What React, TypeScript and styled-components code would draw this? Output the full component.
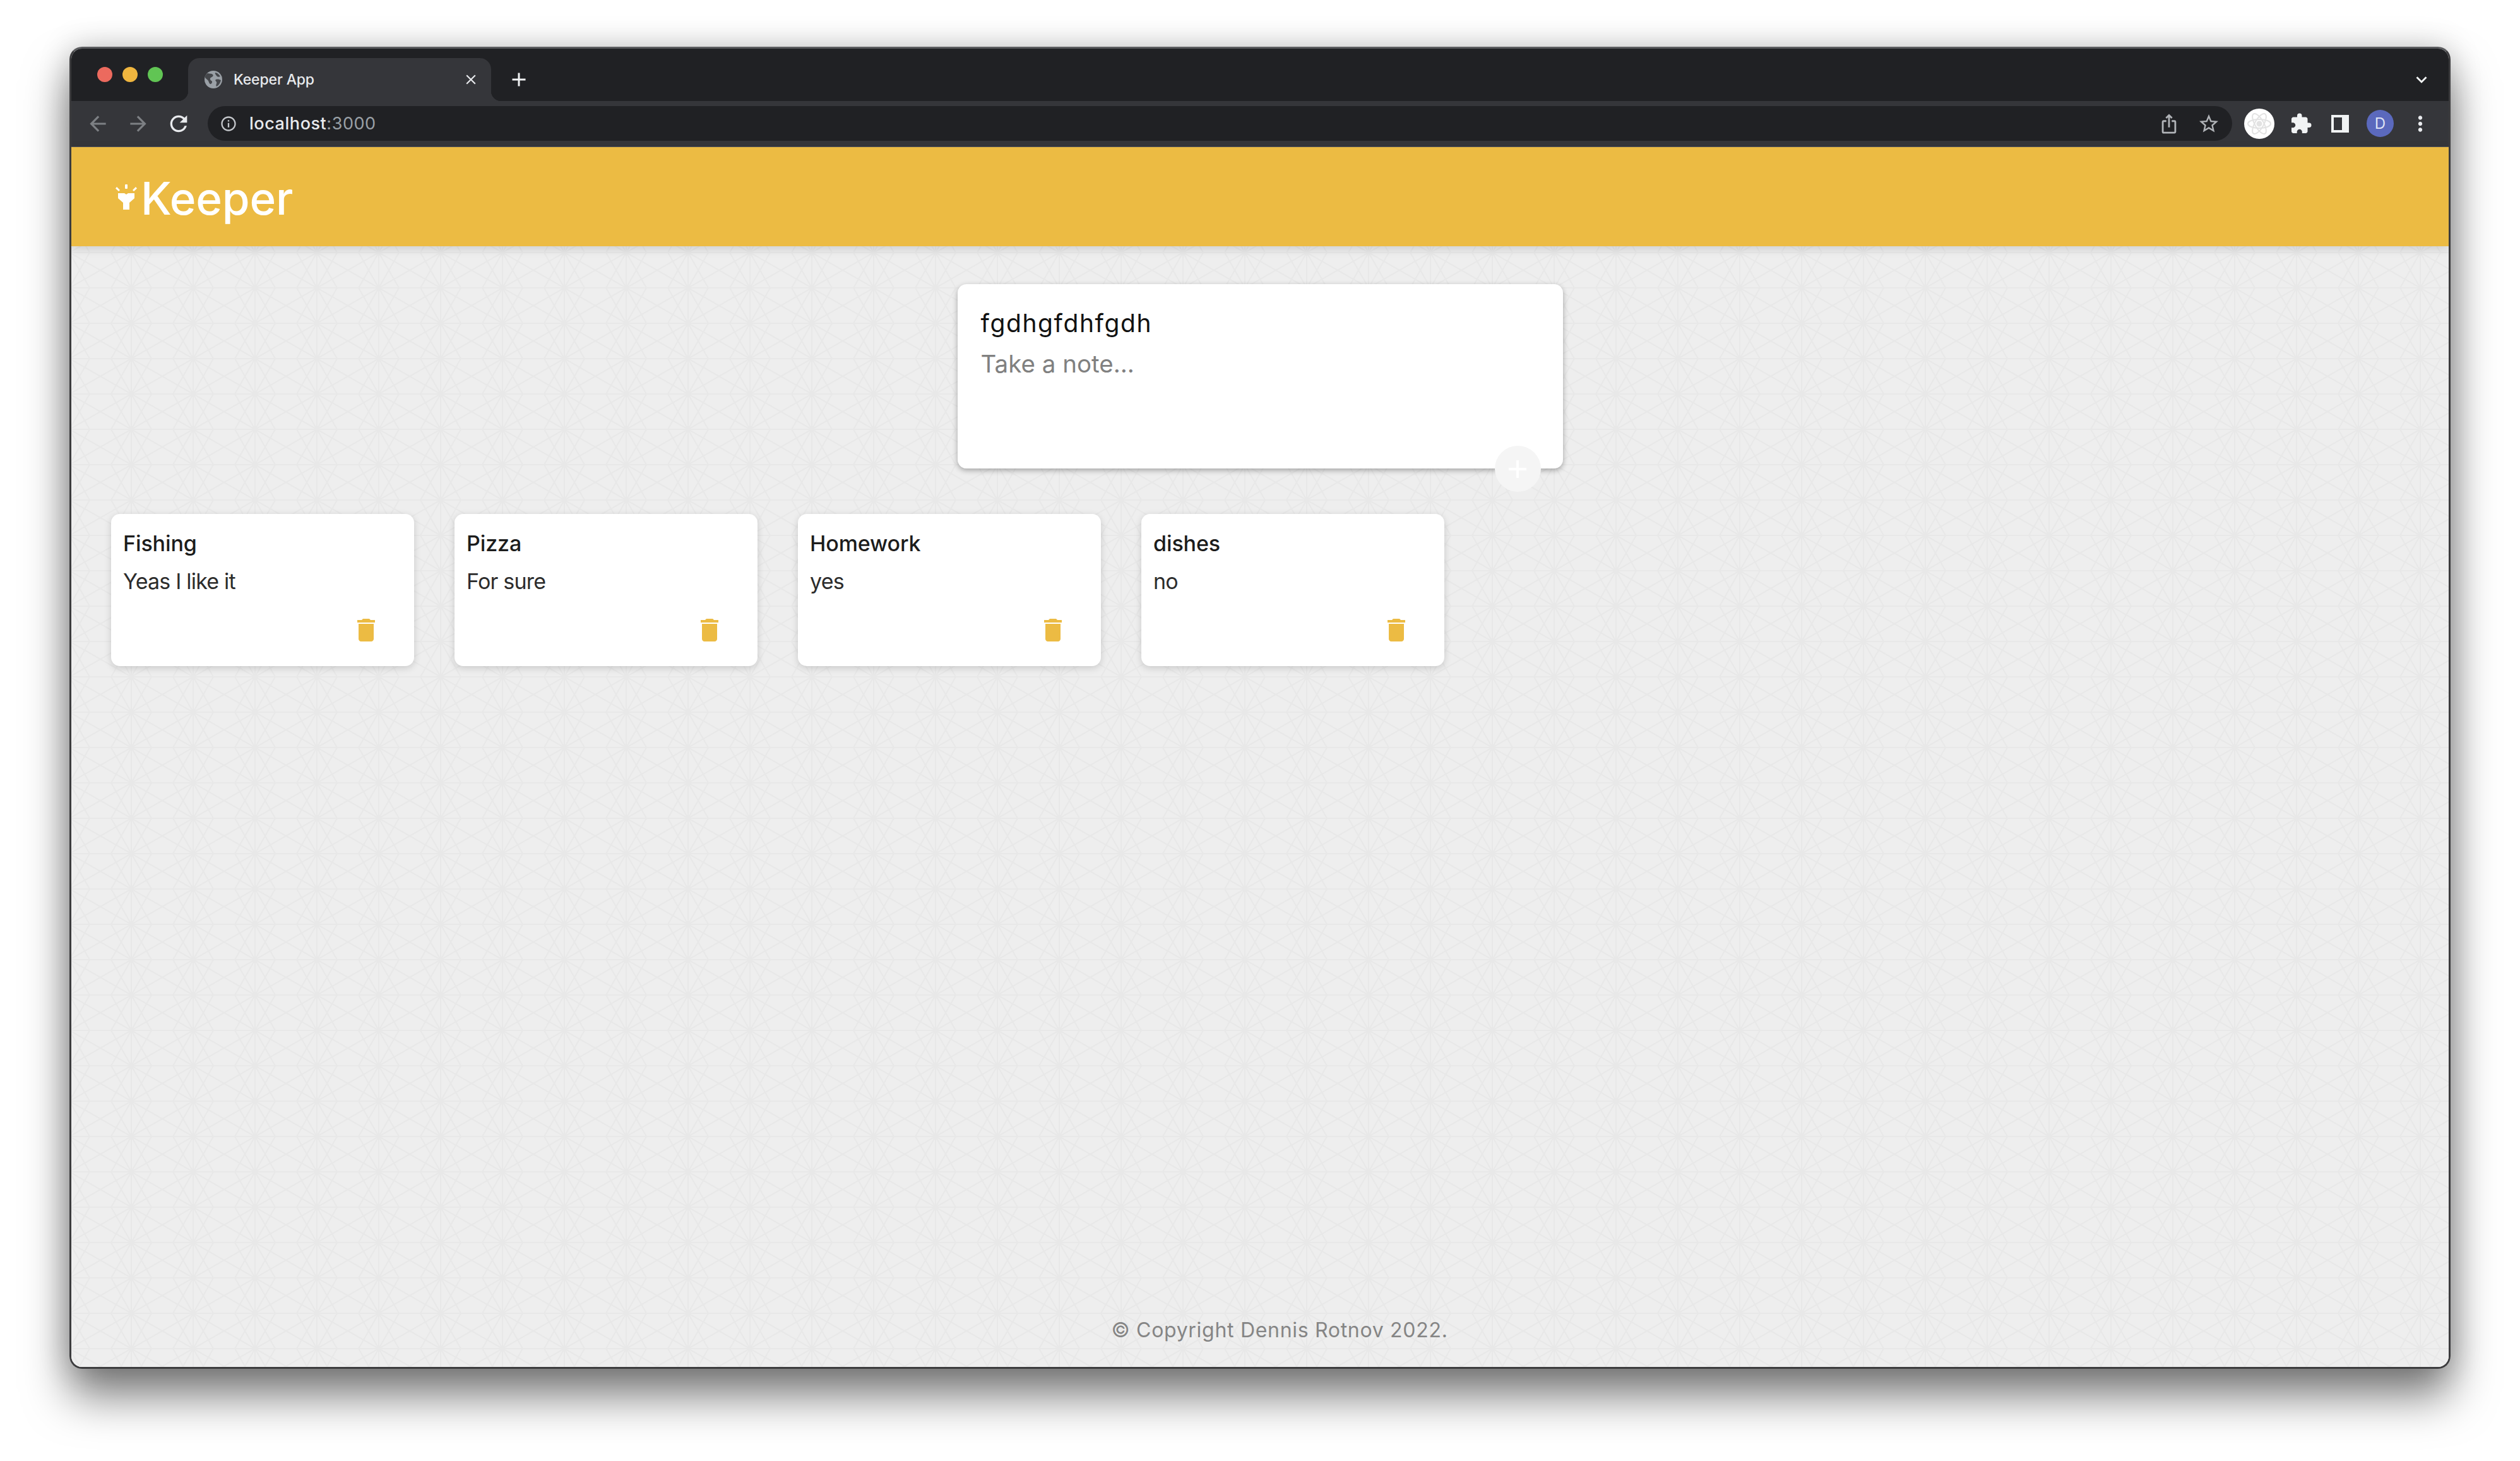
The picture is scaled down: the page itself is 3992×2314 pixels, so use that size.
import React from "react";
import styled, { createGlobalStyle } from "styled-components";
import {
  MdAdd,
  MdArrowBack,
  MdArrowForward,
  MdClose,
  MdDelete,
  MdExtension,
  MdExpandMore,
  MdInfoOutline,
  MdIosShare,
  MdMoreVert,
  MdRefresh,
  MdStarBorder,
} from "react-icons/md";

const patternSvg = `<svg xmlns="http://www.w3.org/2000/svg" width="98" height="56" viewBox="0 0 98 56"><path fill="none" stroke="#e8e8e8" stroke-width="2.2" d="M0 0H98M0 56H98M0 0V56M98 0V56M0 0L98 56M0 56L98 0M0 0L32 56M32 0L0 56M98 0L66 56M66 0L98 56"/></svg>`;
const patternUrl = `url("data:image/svg+xml,${encodeURIComponent(patternSvg)}")`;

const GlobalStyle = createGlobalStyle`
  html, body {
    margin: 0;
    padding: 0;
    background: #ffffff;
    font-family: "Inter", "Liberation Sans", sans-serif;
  }
`;

const Stage = styled.div`
  width: 3992px;
  height: 2314px;
  box-sizing: border-box;
  padding: 74px 110px 146px 110px;
  overflow: hidden;
  background: #ffffff;
`;

const BrowserWindow = styled.div`
  height: 100%;
  display: flex;
  flex-direction: column;
  box-sizing: border-box;
  border: 3px solid #3c3c3e;
  border-top-color: #5a5b5e;
  border-radius: 20px;
  overflow: hidden;
  box-shadow: 0 44px 70px rgba(0, 0, 0, 0.5), 0 0 50px rgba(0, 0, 0, 0.2);
`;

const TabStrip = styled.div`
  height: 83px;
  flex: none;
  display: flex;
  align-items: flex-start;
  padding: 15px 23px 0 41px;
  box-sizing: border-box;
  background: #202124;
`;

const TrafficLights = styled.div`
  display: flex;
  gap: 16px;
  margin-top: 14px;
`;

const Light = styled.span<{ $color: string }>`
  width: 24px;
  height: 24px;
  border-radius: 50%;
  background: ${(p) => p.$color};
`;

const Tab = styled.div`
  position: relative;
  width: 480px;
  height: 68px;
  margin-left: 40px;
  display: flex;
  align-items: center;
  gap: 18px;
  padding: 0 18px 0 26px;
  box-sizing: border-box;
  background: #35363a;
  border-radius: 18px 18px 0 0;

  &::before,
  &::after {
    content: "";
    position: absolute;
    bottom: 0;
    width: 16px;
    height: 16px;
  }
  &::before {
    left: -16px;
    background: radial-gradient(circle at 0 0, #202124 16px, #35363a 16.5px);
  }
  &::after {
    right: -16px;
    background: radial-gradient(circle at 100% 0, #202124 16px, #35363a 16.5px);
  }
`;

const TabTitle = styled.span`
  flex: 1;
  font-size: 23px;
  font-weight: 500;
  letter-spacing: -0.15px;
  color: #e8eaed;
  white-space: nowrap;
`;

const IconSlot = styled.span<{ $size: number; $color?: string }>`
  width: ${(p) => p.$size}px;
  height: ${(p) => p.$size}px;
  flex: none;
  display: flex;
  align-items: center;
  justify-content: center;
  color: ${(p) => p.$color ?? "#e8eaed"};
`;

const NewTab = styled.span`
  width: 40px;
  height: 68px;
  margin-left: 24px;
  display: flex;
  align-items: center;
  justify-content: center;
  color: #f1f3f4;
`;

const TabListButton = styled(NewTab)`
  margin-left: auto;
`;

const Toolbar = styled.div`
  height: 73px;
  flex: none;
  display: flex;
  align-items: center;
  padding: 0 25px 1px 20px;
  box-sizing: border-box;
  background: #35363a;
  border-bottom: 1px solid #55565a;
`;

const NavGroup = styled.div`
  display: flex;
  gap: 20px;
`;

const AddressBar = styled.div`
  flex: 1;
  height: 55px;
  margin-left: 24px;
  display: flex;
  align-items: center;
  padding: 0 19px 0 18px;
  box-sizing: border-box;
  border-radius: 28px;
  background: #202124;
`;

const Url = styled.span`
  margin-left: 18px;
  font-size: 27px;
  letter-spacing: 0.55px;
  color: #9aa0a6;
`;

const UrlHost = styled.span`
  color: #e8eaed;
  font-weight: 500;
`;

const AddressActions = styled.div`
  margin-left: auto;
  display: flex;
  align-items: center;
  gap: 27px;
`;

const Extensions = styled.div`
  margin-left: 19px;
  display: flex;
  align-items: center;
  gap: 22px;
`;

const ReactBadge = styled.span`
  width: 48px;
  height: 48px;
  display: flex;
  align-items: center;
  justify-content: center;
  border-radius: 50%;
  background: #ffffff;
`;

const Avatar = styled.span`
  width: 43px;
  height: 43px;
  display: flex;
  align-items: center;
  justify-content: center;
  border-radius: 50%;
  background: #5b69bd;
  color: #dfe3f5;
  font-size: 24px;
`;

const Header = styled.header`
  position: relative;
  z-index: 1;
  height: 157px;
  flex: none;
  display: flex;
  align-items: center;
  gap: 6px;
  padding: 0 0 0 70px;
  box-sizing: border-box;
  background: #ecbb43;
  box-shadow: 0 4px 14px rgba(0, 0, 0, 0.14);
`;

const LogoText = styled.h1`
  margin: 5px 0 0;
  font-size: 71px;
  font-weight: 500;
  letter-spacing: -0.2px;
  color: #ffffff;
`;

const Page = styled.main`
  flex: 1;
  min-height: 0;
  display: flex;
  flex-direction: column;
  background-color: #eeeeee;
  background-image: ${patternUrl};
  background-size: 98px 56px;
  background-position: 95px 10px;
`;

const CreateCard = styled.form`
  position: relative;
  width: 959px;
  height: 292px;
  margin: 60px auto 0;
  padding: 37px 37px;
  box-sizing: border-box;
  border-radius: 14px;
  background: #ffffff;
  box-shadow: 0 3px 8px rgba(0, 0, 0, 0.32);
`;

const TitleField = styled.div`
  font-size: 39px;
  line-height: 50px;
  letter-spacing: 1.6px;
  color: #111111;
`;

const BodyField = styled.div`
  margin-top: 14px;
  font-size: 38.5px;
  line-height: 50px;
  color: #808080;
`;

const AddButton = styled.span`
  position: absolute;
  right: 35px;
  bottom: -37px;
  width: 73px;
  height: 73px;
  display: flex;
  align-items: center;
  justify-content: center;
  border-radius: 50%;
  background: #f5f5f5;
  color: #ffffff;
`;

const NotesRow = styled.section`
  display: flex;
  gap: 64px;
  margin-top: 72px;
  padding-left: 63px;
`;

const NoteCard = styled.article`
  width: 480px;
  height: 241px;
  display: flex;
  flex-direction: column;
  padding: 24px 52px 33px 19px;
  box-sizing: border-box;
  border-radius: 14px;
  background: #ffffff;
  box-shadow: 0 3px 12px rgba(0, 0, 0, 0.16);
`;

const NoteTitle = styled.h2`
  margin: 0;
  font-size: 34px;
  line-height: 46px;
  font-weight: 500;
  letter-spacing: -0.1px;
  color: #1c1c1c;
`;

const NoteBody = styled.p`
  margin: 14px 0 0;
  font-size: 34px;
  line-height: 46px;
  font-weight: 400;
  letter-spacing: -0.8px;
  color: #2c2c2c;
`;

const DeleteButton = styled.span`
  margin-top: auto;
  align-self: flex-end;
  display: flex;
  color: #ecbb43;
`;

const Footer = styled.footer`
  margin-top: auto;
  padding: 0 0 38px 62px;
  text-align: center;
  font-size: 32px;
  line-height: 40px;
  letter-spacing: 0.7px;
  color: #858585;
`;

const notes = [
  { title: "Fishing", body: "Yeas I like it" },
  { title: "Pizza", body: "For sure" },
  { title: "Homework", body: "yes" },
  { title: "dishes", body: "no" },
];

function Globe() {
  return (
    <svg width="28" height="28" viewBox="0 0 28 28">
      <circle cx="14" cy="14" r="14" fill="#9aa0a6" />
      <path
        fill="#45474b"
        d="M5 4c3 1 6 0 8 2s-1 4-3 5-1 4 1 5 1 4-1 5-3-3-4-5-4-3-5-5 1-5 4-7zM17 3c3 0 6 3 8 6-2 1-5 1-6-1s-3-3-2-5zM18 14c3-1 6 0 8 1-1 4-3 8-7 10-2-2 1-5 0-7s-3-3-1-4z"
      />
    </svg>
  );
}

function Flashlight() {
  return (
    <svg width="34" height="40" viewBox="0 0 34 40" fill="#ffffff">
      <rect x="15" y="0" width="4" height="7" rx="1" />
      <path d="M0 6.5 2 4l5 5-2 2zM34 6.5 32 4l-5 5 2 2z" />
      <path d="M4 14h10l3 2 3-2h10v8l-8 7v11H12V29l-8-7z" />
    </svg>
  );
}

function SidePanel() {
  return (
    <svg width="28" height="28" viewBox="0 0 28 28">
      <path fill="#f1f3f4" fillRule="evenodd" d="M0 0h28v28H0zM4 4v20h13V4z" />
    </svg>
  );
}

function ReactMark() {
  return (
    <svg width="40" height="40" viewBox="-20 -20 40 40" fill="none" stroke="#e2e2e2" strokeWidth="2">
      <circle r="3.5" fill="#e2e2e2" />
      <ellipse rx="18" ry="7" />
      <ellipse rx="18" ry="7" transform="rotate(60)" />
      <ellipse rx="18" ry="7" transform="rotate(120)" />
    </svg>
  );
}

export default function App() {
  return (
    <>
      <GlobalStyle />
      <Stage>
        <BrowserWindow>
          <TabStrip>
            <TrafficLights>
              <Light $color="#ec6a5e" />
              <Light $color="#f0b63f" />
              <Light $color="#61c554" />
            </TrafficLights>
            <Tab>
              <Globe />
              <TabTitle>Keeper App</TabTitle>
              <IconSlot $size={28}>
                <MdClose size={26} />
              </IconSlot>
            </Tab>
            <NewTab>
              <MdAdd size={36} />
            </NewTab>
            <TabListButton>
              <MdExpandMore size={34} />
            </TabListButton>
          </TabStrip>
          <Toolbar>
            <NavGroup>
              <IconSlot $size={44} $color="#7d8084">
                <MdArrowBack size={38} />
              </IconSlot>
              <IconSlot $size={44} $color="#7d8084">
                <MdArrowForward size={38} />
              </IconSlot>
              <IconSlot $size={44}>
                <MdRefresh size={40} />
              </IconSlot>
            </NavGroup>
            <AddressBar>
              <IconSlot $size={30} $color="#c4c7cb">
                <MdInfoOutline size={28} />
              </IconSlot>
              <Url>
                <UrlHost>localhost</UrlHost>:3000
              </Url>
              <AddressActions>
                <IconSlot $size={36} $color="#b0b3b7">
                  <MdIosShare size={34} />
                </IconSlot>
                <IconSlot $size={36} $color="#b0b3b7">
                  <MdStarBorder size={36} />
                </IconSlot>
              </AddressActions>
            </AddressBar>
            <Extensions>
              <ReactBadge>
                <ReactMark />
              </ReactBadge>
              <IconSlot $size={40} $color="#f1f3f4">
                <MdExtension size={36} />
              </IconSlot>
              <IconSlot $size={40}>
                <SidePanel />
              </IconSlot>
              <Avatar>D</Avatar>
              <IconSlot $size={40} $color="#e8eaed">
                <MdMoreVert size={38} />
              </IconSlot>
            </Extensions>
          </Toolbar>
          <Header>
            <Flashlight />
            <LogoText>Keeper</LogoText>
          </Header>
          <Page>
            <CreateCard>
              <TitleField>fgdhgfdhfgdh</TitleField>
              <BodyField>Take a note...</BodyField>
              <AddButton>
                <MdAdd size={48} />
              </AddButton>
            </CreateCard>
            <NotesRow>
              {notes.map((note) => (
                <NoteCard key={note.title}>
                  <NoteTitle>{note.title}</NoteTitle>
                  <NoteBody>{note.body}</NoteBody>
                  <DeleteButton>
                    <MdDelete size={48} />
                  </DeleteButton>
                </NoteCard>
              ))}
            </NotesRow>
            <Footer>© Copyright Dennis Rotnov 2022.</Footer>
          </Page>
        </BrowserWindow>
      </Stage>
    </>
  );
}
